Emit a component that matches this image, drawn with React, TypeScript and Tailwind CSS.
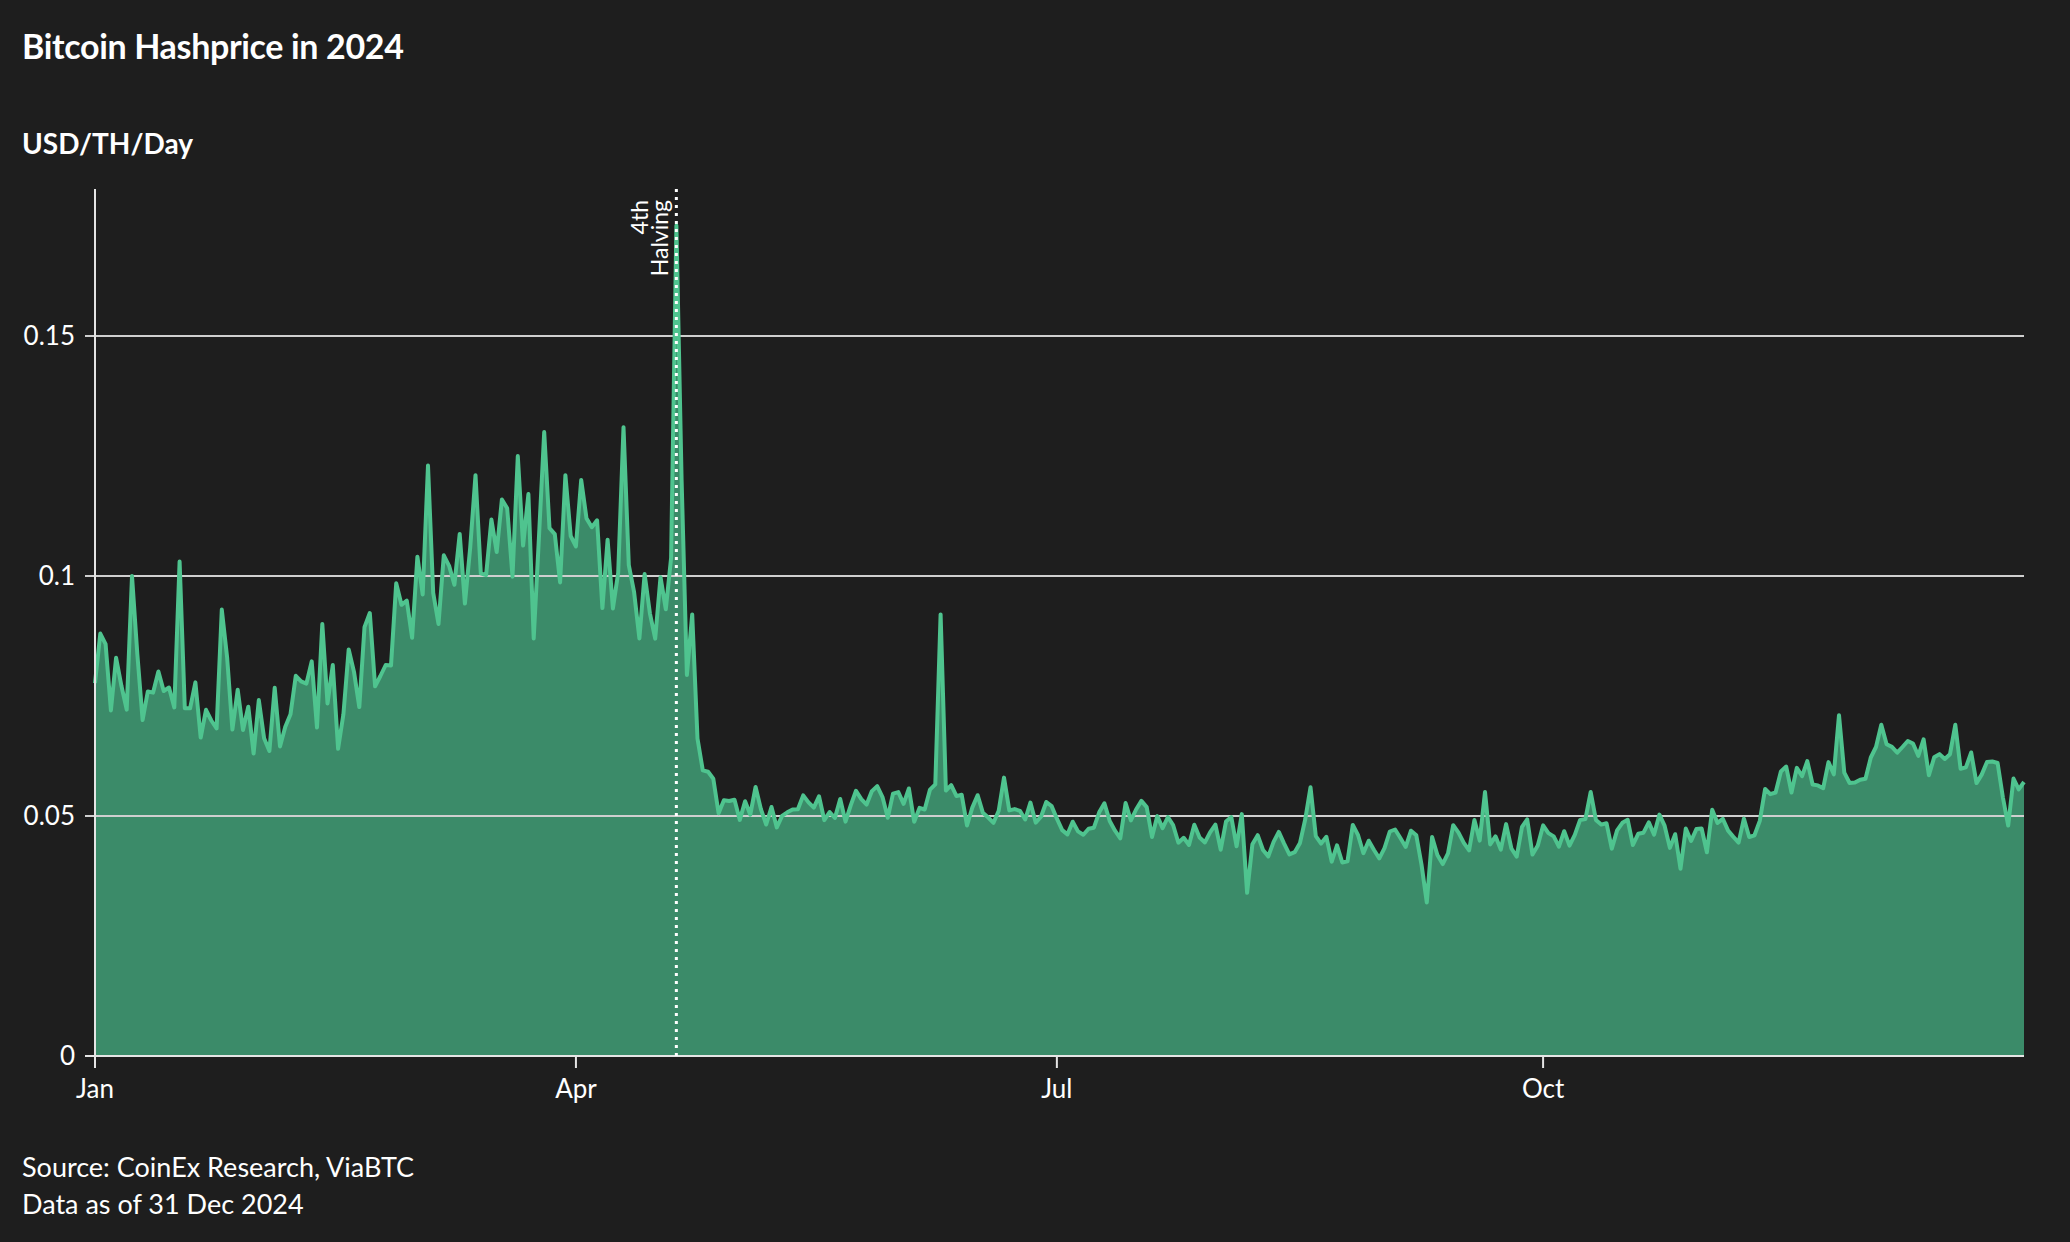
const X0 = 95;
const DAY = 5.285;
const Y0 = 876;
const K = 4800;

const ANCHORS: [number, number][] = [
  [0, 0.08], [10, 0.08], [20, 0.076], [35, 0.07], [45, 0.076], [55, 0.086], [62, 0.096],
  [70, 0.104], [80, 0.108], [90, 0.104], [100, 0.1], [109, 0.095], [112, 0.08], [115, 0.06],
  [119, 0.051], [140, 0.053], [160, 0.053], [190, 0.05], [215, 0.047], [230, 0.045],
  [250, 0.043], [260, 0.045], [280, 0.046], [300, 0.046], [312, 0.048], [320, 0.057],
  [335, 0.061], [350, 0.062], [365, 0.057],
];

const SPIKES: Record<number, number> = {
  1: 0.088, 3: 0.072, 7: 0.1, 9: 0.07, 16: 0.103, 24: 0.093, 26: 0.068, 30: 0.063, 43: 0.09,
  46: 0.064, 58: 0.094, 63: 0.123, 65: 0.09, 72: 0.121, 76: 0.105, 80: 0.125, 83: 0.087,
  85: 0.13, 89: 0.121, 92: 0.12, 100: 0.131, 103: 0.087, 110: 0.173, 111: 0.12, 113: 0.092,
  160: 0.092, 172: 0.058, 218: 0.034, 230: 0.056, 252: 0.032, 263: 0.055, 283: 0.055,
  300: 0.039, 330: 0.071, 338: 0.069, 352: 0.069, 362: 0.048,
};

function base(d: number) {
  for (let i = 0; i < ANCHORS.length - 1; i++) {
    const [a, va] = ANCHORS[i];
    const [b, vb] = ANCHORS[i + 1];
    if (d >= a && d <= b) return va + ((vb - va) * (d - a)) / (b - a);
  }
  return 0.057;
}

function rnd(i: number) {
  const s = Math.sin(i * 12.9898 + 4.1) * 43758.5453;
  return s - Math.floor(s) - 0.5;
}

const values = Array.from({ length: 366 }, (_, d) => {
  if (SPIKES[d] !== undefined) return SPIKES[d];
  const amp = d < 110 ? 0.02 : 0.009;
  return base(d) + rnd(d) * amp;
});

const pts = values.map((v, d) => `${(X0 + d * DAY).toFixed(1)},${(Y0 - v * K).toFixed(1)}`);
const linePath = "M" + pts.join(" L");
const xEnd = X0 + 365 * DAY;
const areaPath = `${linePath} L${xEnd.toFixed(1)},${Y0} L${X0},${Y0} Z`;

const MONTHS = [
  { label: "Jan", day: 0 },
  { label: "Apr", day: 91 },
  { label: "Jul", day: 182 },
  { label: "Oct", day: 274 },
];

const GRID = [0.05, 0.1, 0.15];
const font = { fontFamily: "Lato, 'Open Sans', sans-serif" };

export default function App() {
  const hx = X0 + 110 * DAY;
  return (
    <div
      className="flex h-[1242px] w-[2070px] flex-col bg-[#1e1e1e] pt-[26px] text-white"
      style={font}
    >
      <h1 className="pl-[22px] text-[34px] leading-[40px] font-bold tracking-[-0.01em]">
        Bitcoin Hashprice in 2024
      </h1>
      <p className="mt-[60px] pl-[22px] text-[28px] leading-[34px] font-bold">USD/TH/Day</p>

      <svg width={2070} height={930} className="mt-[20px] block" style={font}>
        <path d={areaPath} fill="#3b8b69" />
        {GRID.map((g) => (
          <g key={g}>
            <line x1={85} x2={2024} y1={Y0 - g * K} y2={Y0 - g * K} stroke="#cfcfcf" strokeWidth={2} />
            <text x={75} y={Y0 - g * K + 9} fill="#fff" fontSize={26} textAnchor="end">
              {g === 0.1 ? "0.1" : String(g)}
            </text>
          </g>
        ))}
        <path d={linePath} fill="none" stroke="#4fc48f" strokeWidth={4} strokeLinejoin="round" />
        <line x1={X0} x2={X0} y1={9} y2={Y0} stroke="#e5e5e5" strokeWidth={2} />
        <line x1={85} x2={2024} y1={Y0} y2={Y0} stroke="#e5e5e5" strokeWidth={2} />
        <text x={75} y={Y0 + 9} fill="#fff" fontSize={26} textAnchor="end">0</text>
        {MONTHS.map((m) => (
          <g key={m.label}>
            <line x1={X0 + m.day * DAY} x2={X0 + m.day * DAY} y1={Y0} y2={Y0 + 12} stroke="#e5e5e5" strokeWidth={2} />
            <text x={X0 + m.day * DAY} y={Y0 + 42} fill="#fff" fontSize={26} textAnchor="middle">
              {m.label}
            </text>
          </g>
        ))}
        <line x1={hx} x2={hx} y1={9} y2={Y0} stroke="#ffffff" strokeWidth={3} strokeDasharray="3 5" />
        <text transform={`translate(${hx - 28},20) rotate(-90)`} fill="#fff" fontSize={23} textAnchor="end">
          4th
        </text>
        <text transform={`translate(${hx - 8},20) rotate(-90)`} fill="#fff" fontSize={23} textAnchor="end">
          Halving
        </text>
      </svg>

      <div className="mt-[38px] pl-[22px] text-[27px] leading-[37px]">
        <p>Source: CoinEx Research, ViaBTC</p>
        <p>Data as of 31 Dec 2024</p>
      </div>
    </div>
  );
}
